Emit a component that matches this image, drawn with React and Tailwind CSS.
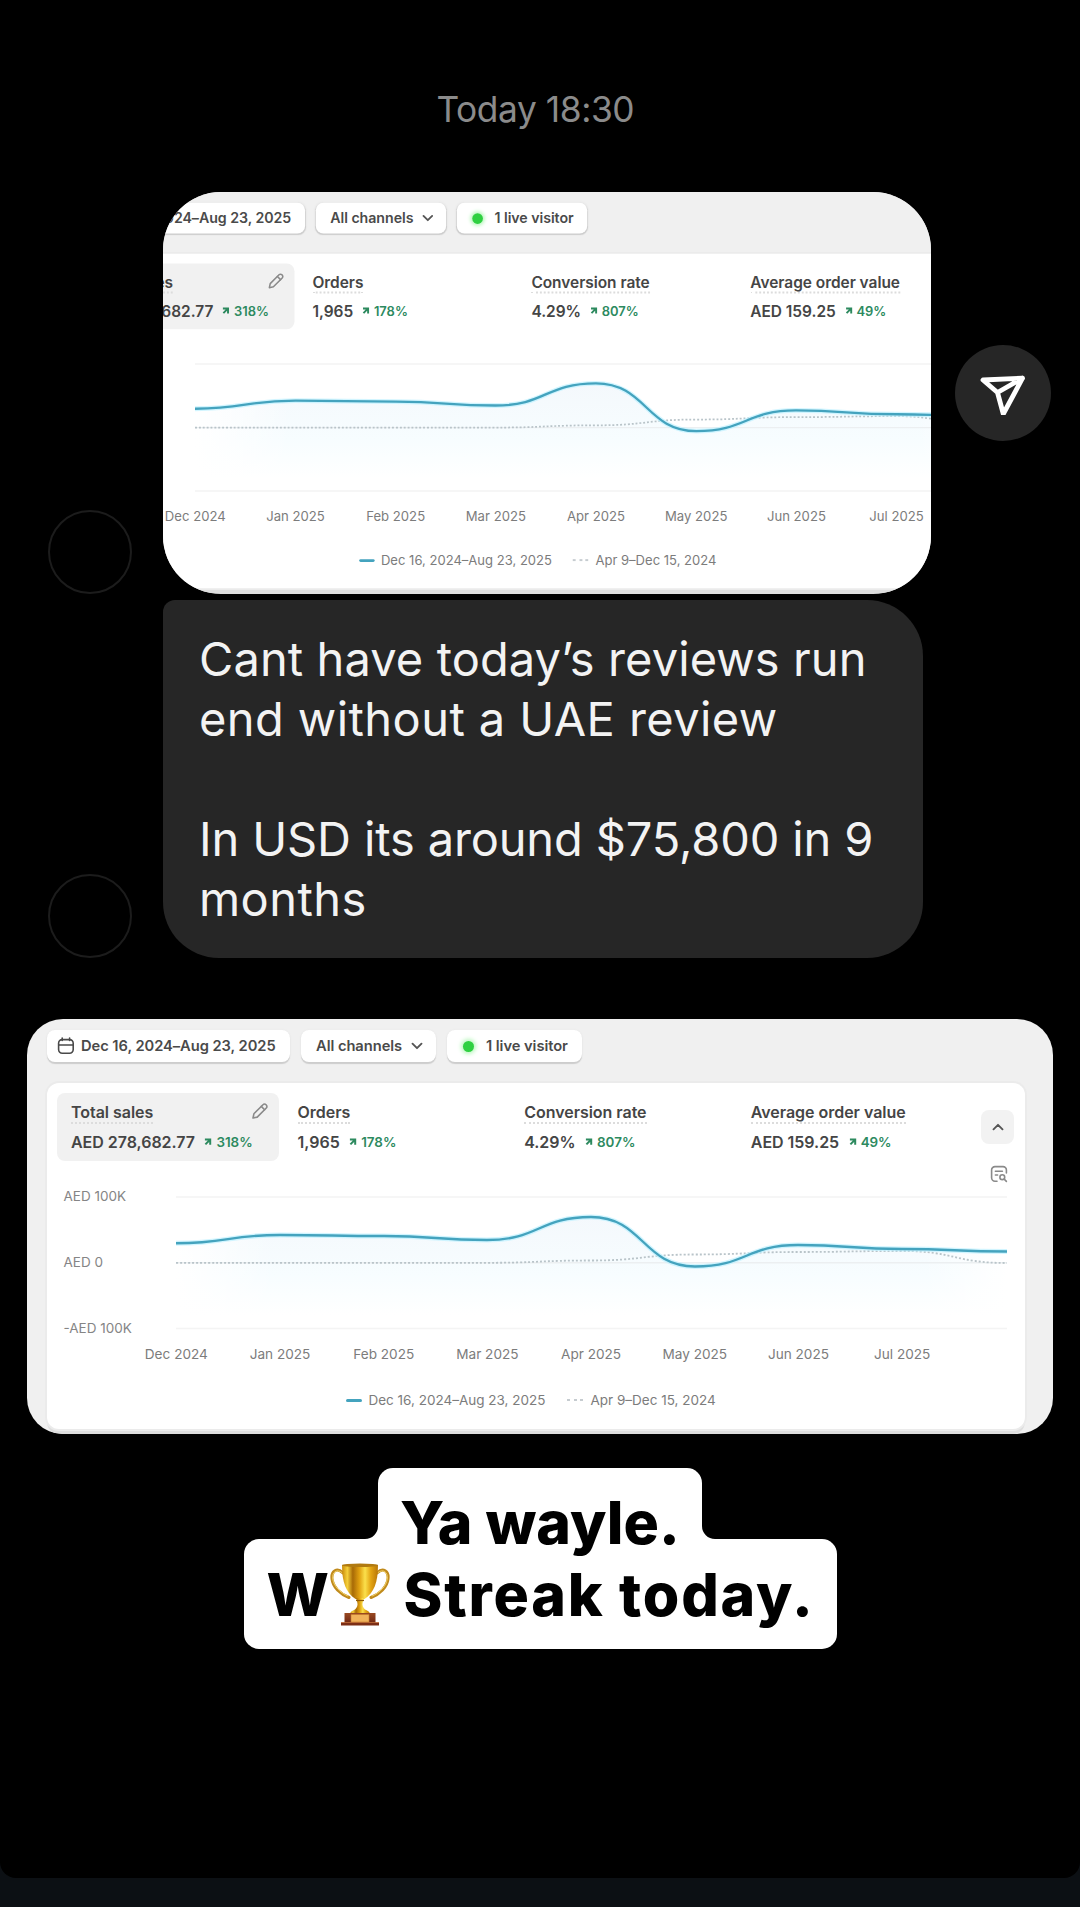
import React from 'react';

const METRICS = [
  { name: 'Total sales', value: 'AED 278,682.77', change: '318%', selected: true },
  { name: 'Orders', value: '1,965', change: '178%' },
  { name: 'Conversion rate', value: '4.29%', change: '807%' },
  { name: 'Average order value', value: 'AED 159.25', change: '49%' },
];

const MONTHS = ['Dec 2024', 'Jan 2025', 'Feb 2025', 'Mar 2025', 'Apr 2025', 'May 2025', 'Jun 2025', 'Jul 2025'];

const CURRENT = [[0, 58.3], [104, 50], [208, 51], [311, 55], [415, 32], [519, 81.5], [622, 60], [726, 64], [831, 66.5]];
const PREVIOUS = [[0, 77.8], [104, 77.8], [208, 77.8], [311, 77.8], [415, 75.5], [519, 69.5], [622, 67], [726, 66], [831, 78]];

function smoothPath(points) {
  return points.reduce((d, [x, y], i) => {
    if (i === 0) return `M${x} ${y}`;
    const [px, py] = points[i - 1];
    const mid = (px + x) / 2;
    return `${d} C${mid} ${py} ${mid} ${y} ${x} ${y}`;
  }, '');
}

function CalendarIcon() {
  return (
    <svg viewBox="0 0 18 18" className="h-[18px] w-[18px]" fill="none" stroke="#4a4a4a" strokeWidth="1.6" strokeLinecap="round">
      <rect x="1.6" y="2.6" width="14.6" height="13.6" rx="3.6" />
      <path d="M1.8 8h14.2M5.2 1v2.4M12.6 1v2.4" />
    </svg>
  );
}

function PencilIcon() {
  return (
    <svg viewBox="0 0 18 18" className="h-[18px] w-[18px]" fill="none" stroke="#8a8a8a" strokeWidth="1.6" strokeLinejoin="round" strokeLinecap="round">
      <path d="M2 16l.9-4.2L12 2.700a2.100 2.100 0 0 1 3 0l.3.3a2.100 2.100 0 0 1 0 3L6.200 15.100z" />
      <path d="M10.300 4.400l3.300 3.300" />
    </svg>
  );
}

function Chevron({ up }) {
  return (
    <svg viewBox="0 0 12 8" className="h-2 w-3" fill="none" stroke="#555" strokeWidth="1.9" strokeLinecap="round" strokeLinejoin="round">
      <path d={up ? 'M1.500 6.300L6 1.800l4.500 4.500' : 'M1.500 1.700L6 6.200l4.500-4.500'} />
    </svg>
  );
}

function TrendArrow() {
  return (
    <svg viewBox="0 0 8 8" className="h-2 w-2" fill="none" stroke="#2d8a5f" strokeWidth="2">
      <path d="M0.900 1.500h5.300v5.300M6 1.700L1.400 6.400" />
    </svg>
  );
}

function QueryIcon() {
  return (
    <svg viewBox="0 0 18 18" className="h-[18px] w-[18px]" fill="none" stroke="#8a8a8a" strokeWidth="1.6" strokeLinecap="round">
      <path d="M7 16.200H5A3.400 3.400 0 0 1 1.600 12.800V5A3.400 3.400 0 0 1 5 1.600h8A3.400 3.400 0 0 1 16.400 5v3" />
      <path d="M5.400 6.300h7M5.400 10h2.200" />
      <circle cx="12.300" cy="12.200" r="2.400" />
      <path d="M14.200 14.100l2.200 2.300" />
    </svg>
  );
}

function Pill({ className, children }) {
  return (
    <div className={`flex h-8 items-center rounded-lg bg-white text-[14.700px] font-semibold tracking-[-0.003em] text-[#4a4a4a] shadow-[0_1.5px_1px_#cdcdcd,0_0_2px_#e6e6e6] ${className}`}>
      {children}
    </div>
  );
}

function Metric({ name, value, change, selected }) {
  return (
    <div className={`flex h-[68px] w-[222px] flex-col items-start rounded-lg pt-[9px] pl-[14px] ${selected ? 'bg-[#f1f1f1]' : ''}`}>
      <div className="flex w-full items-start justify-between pr-[10px]">
        <span className="border-b-2 border-dotted border-[#dcdcdc] text-base leading-5 font-semibold tracking-[-0.002em] text-[#454545]">{name}</span>
        {selected && <PencilIcon />}
      </div>
      <div className="mt-2 flex items-center leading-5">
        <span className="text-base leading-5 font-semibold tracking-[-0.002em] text-[#454545]">{value}</span>
        <span className="ml-[9.500px]"><TrendArrow /></span>
        <span className="ml-1 text-[13.400px] font-semibold text-[#2d8a5f]">{change}</span>
      </div>
    </div>
  );
}

function SalesChart({ id }) {
  const line = smoothPath(CURRENT);
  return (
    <svg viewBox="0 0 832 156" className="h-[156px] w-[832px]" fill="none">
      <defs>
        <linearGradient id={id} x1="0" y1="30" x2="0" y2="130" gradientUnits="userSpaceOnUse">
          <stop offset="0" stopColor="#f4f8fc" />
          <stop offset="0.6" stopColor="#f7fdff" />
          <stop offset="1" stopColor="#ffffff" />
        </linearGradient>
        <linearGradient id={`${id}-fade`} x1="0" x2="1" y1="0" y2="0">
          <stop offset="0" stopColor="#fff" />
          <stop offset="0.12" stopColor="#fff" stopOpacity="0" />
          <stop offset="0.9" stopColor="#fff" stopOpacity="0" />
          <stop offset="1" stopColor="#fff" />
        </linearGradient>
      </defs>
      <path d={`${line} V130 H0 Z`} fill={`url(#${id})`} />
      <path d={`${line} V130 H0 Z`} fill={`url(#${id}-fade)`} />
      <path d="M0 12H831M0 143.500H831" stroke="#f4f4f4" strokeWidth="1.600" />
      <path d="M0 77.800H831" stroke="#eceff1" strokeWidth="1.400" />
      <path d={smoothPath(PREVIOUS)} stroke="#b9c4c9" strokeWidth="1.800" strokeDasharray="2 2" />
      <path d={line} stroke="#bdf1ff" strokeWidth="5" opacity="0.700" />
      <path d={line} stroke="#44a3be" strokeWidth="2.400" />
    </svg>
  );
}

function AnalyticsPanel({ id }) {
  return (
    <div className="h-[415px] w-[1026px] shrink-0 overflow-hidden bg-[#f0f0f0] pt-[11px] whitespace-nowrap">
      <div className="flex pl-5">
        <Pill className="w-[243px] pl-[10px]">
          <CalendarIcon />
          <span className="ml-[6px]">Dec 16, 2024–Aug 23, 2025</span>
        </Pill>
        <Pill className="ml-[11px] w-[135px] pl-[15px]">
          <span>All channels</span>
          <span className="ml-[9px]"><Chevron /></span>
        </Pill>
        <Pill className="ml-[11px] w-[135px] pl-4">
          <span className="h-[11px] w-[11px] rounded-full bg-[#2fd041] shadow-[0_0_4px_2px_#b9f7bd]" />
          <span className="ml-3">1 live visitor</span>
        </Pill>
      </div>

      <div className="mt-[21px] ml-5 h-[346px] w-[978px] rounded-xl bg-white shadow-[0_0_0_2px_#ebebeb,0_5px_0_#dedede]">
        <div className="flex h-[101px] justify-between pr-[11px] pl-[10px]">
          <div className="grid grid-cols-[226.600px_226.600px_226.600px_226.600px] pt-[10px]">
            {METRICS.map((m) => <Metric key={m.name} {...m} />)}
          </div>
          <div className="flex flex-col items-center pt-[27px]">
            <div className="flex h-[34px] w-[33px] items-center justify-center rounded-lg bg-[#f2f2f2]"><Chevron up /></div>
            <div className="mt-[21px] ml-[3px]"><QueryIcon /></div>
          </div>
        </div>

        <div className="flex text-[13.500px] leading-6 text-[#858585]">
          <div className="flex h-[156px] w-[129px] flex-col justify-between pl-[16.500px]">
            <span>AED 100K</span>
            <span>AED 0</span>
            <span>-AED 100K</span>
          </div>
          <div className="pt-[0.500px]"><SalesChart id={id} /></div>
        </div>
        <div className="mt-[3px] ml-[77.500px] flex text-[13.600px] leading-5 text-[#7c7c7c]">
          {MONTHS.map((m) => <span key={m} className="w-[103.700px] text-center">{m}</span>)}
        </div>
        <div className="mt-[26.500px] flex items-center pl-[299px] text-[13.500px] leading-5 text-[#7c7c7c]">
          <span className="h-[3px] w-4 rounded-full bg-[#44a3be]" />
          <span className="ml-[6.500px]">Dec 16, 2024–Aug 23, 2025</span>
          <span className="ml-[22px] flex gap-[3.500px]">
            <span className="h-[2px] w-[3px] bg-[#c6ccd0]" />
            <span className="h-[2px] w-[3px] bg-[#c6ccd0]" />
            <span className="h-[2px] w-[3px] bg-[#c6ccd0]" />
          </span>
          <span className="ml-[7px]">Apr 9–Dec 15, 2024</span>
        </div>
      </div>
    </div>
  );
}

function Avatar() {
  return <div className="h-[84px] w-[84px] shrink-0 self-end rounded-full border-2 border-[#1c1c1c]" />;
}

function SendButton() {
  return (
    <div className="ml-6 flex h-24 w-24 shrink-0 items-center justify-center self-center rounded-full bg-[#262626]">
      <svg viewBox="0 0 48 44" className="h-11 w-12" fill="none" stroke="#fff" strokeWidth="4.800" strokeLinejoin="round" strokeLinecap="round">
        <path d="M4 9L43.500 7.200L24.300 43L18.500 21.500ZM18.500 21.500L43.500 7.200" />
      </svg>
    </div>
  );
}

function Trophy() {
  return (
    <svg viewBox="0 0 60 64" className="h-16 w-[60px]">
      <defs>
        <linearGradient id="gold" x1="0" x2="1" y1="0" y2="0">
          <stop offset="0" stopColor="#c98a0b" />
          <stop offset="0.150" stopColor="#f5cf3a" />
          <stop offset="0.300" stopColor="#a86a06" />
          <stop offset="0.480" stopColor="#e0a010" />
          <stop offset="0.640" stopColor="#fbe04c" />
          <stop offset="0.800" stopColor="#e3a412" />
          <stop offset="1" stopColor="#b87608" />
        </linearGradient>
        <linearGradient id="wood" x1="0" x2="0" y1="0" y2="1">
          <stop offset="0" stopColor="#9a4a22" />
          <stop offset="1" stopColor="#6f2712" />
        </linearGradient>
      </defs>
      <g fill="none" stroke="#c08a1c" strokeWidth="3" strokeLinecap="round">
        <path d="M13 11C7 5 1 9 2 17c1 8 8 15 17 18.500" />
        <path d="M47 11c6-6 12-2 11 6-1 8-8 15-17 18.500" />
      </g>
      <g fill="none" stroke="#f3d46a" strokeWidth="1" strokeLinecap="round">
        <path d="M12 10.500C7 6.500 1.800 10 2.800 17c1 7 7 13.500 15 17" />
        <path d="M48 10.500c5-4 10.200-.5 9.200 6.500-1 7-7 13.500-15 17" />
      </g>
      <path d="M12 3h36c0 17-4 28-13.500 34h-9C16 31 12 20 12 3z" fill="url(#gold)" />
      <ellipse cx="30" cy="3.200" rx="18" ry="1.700" fill="#b17a10" />
      <path d="M26 36h8l-1.200 4c-1 3 .2 6 2.200 7.500 3 1.500 5 2.500 5 4.500H20c0-2 2-3 5-4.500 2-1.500 3.200-4.500 2.200-7.500z" fill="url(#gold)" />
      <path d="M26 38.500h8" stroke="#8f5906" strokeWidth="1.200" />
      <path d="M14.500 51h31v10h-31z" fill="url(#wood)" />
      <path d="M11 60.500h38v3H11z" fill="#7c2e15" />
      <path d="M11 60.500h38" stroke="#c4703c" strokeWidth="0.800" />
      <path d="M21 52.500h18v7.500H21z" fill="#f0b25a" stroke="#c77b2c" strokeWidth="0.600" />
    </svg>
  );
}

function InnerCorner({ className, d }) {
  return (
    <svg viewBox="0 0 13 13" className={`absolute bottom-0 h-[13px] w-[13px] ${className}`} fill="#fff">
      <path d={d} />
    </svg>
  );
}

export default function App() {
  return (
    <div className="h-[1907px] w-[1080px] overflow-hidden bg-[#0c1014] font-['Inter',sans-serif]">
      <main className="flex h-[1878px] flex-col rounded-b-2xl bg-black">
        <div className="mt-[90px] flex h-10 pl-[436.500px] text-[35.300px] leading-10 tracking-[-0.012em] text-[#8b8b8b]">Today 18:30</div>

        <div className="mt-[62px] flex pl-12">
          <Avatar />
          <div className="ml-[31px] h-[402px] w-[768px] shrink-0 overflow-hidden rounded-[58px] bg-[#dedede]">
            <div className="-ml-28 w-[1026px] origin-top-left scale-[0.9662]">
              <AnalyticsPanel id="fill-message" />
            </div>
          </div>
          <SendButton />
        </div>

        <div className="mt-[6px] flex pl-12">
          <Avatar />
          <div className="ml-[31px] h-[358px] w-[760px] rounded-[56px] rounded-tl-xl bg-[#262626] pt-[29px] pl-[36px] text-[47px] leading-[60px] whitespace-nowrap text-[#f3f3f3]">
            <p className="tracking-[0.002em]">Cant have today’s reviews run</p>
            <p className="tracking-[0.009em]">end without a UAE review</p>
            <p className="mt-[60px] tracking-[-0.003em]">In USD its around $75,800 in 9</p>
            <p className="tracking-[0.009em]">months</p>
          </div>
        </div>

        <div className="mt-[61px] ml-[27px] w-[1026px] overflow-hidden rounded-[36px]">
          <AnalyticsPanel id="fill-full" />
        </div>

        <div className="mt-[34px] flex flex-col items-center text-[59px] leading-[71px] font-extrabold whitespace-nowrap text-black">
          <div className="relative z-10 flex h-[71px] w-[324px] justify-center rounded-t-[15px] bg-white pt-[19px] tracking-[0.002em]">
            <span>Ya wayle.</span>
            <InnerCorner className="-left-[13px]" d="M13 0v13H0A13 13 0 0 0 13 0z" />
            <InnerCorner className="-right-[13px]" d="M0 0v13h13A13 13 0 0 1 0 0z" />
          </div>
          <div className="flex h-[110px] w-[593px] rounded-[15px] bg-white pt-5 pl-[23px]">
            <span className="w-[61px]">W</span>
            <span className="ml-[2px] pt-[3px]"><Trophy /></span>
            <span className="ml-[14px] tracking-[0.030em]">Streak today.</span>
          </div>
        </div>
      </main>
    </div>
  );
}
